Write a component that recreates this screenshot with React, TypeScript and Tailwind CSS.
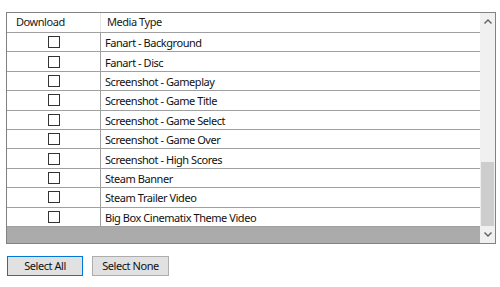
import React from "react";

const items = [
  "Fanart - Background",
  "Fanart - Disc",
  "Screenshot - Gameplay",
  "Screenshot - Game Title",
  "Screenshot - Game Select",
  "Screenshot - Game Over",
  "Screenshot - High Scores",
  "Steam Banner",
  "Steam Trailer Video",
  "Big Box Cinematix Theme Video",
];

export default function App() {
  return (
    <div
      className="w-[500px] h-[287px] bg-white text-[11px] tracking-[-0.45px] text-[#111]"
      style={{ fontFamily: '"Noto Sans", "Open Sans", sans-serif' }}
    >
      <div className="pt-[12px] pl-[6px]">
        <div className="w-[490px] h-[232px] border border-[#828282] flex">
          <div className="flex-1 flex flex-col">
            <div className="h-[20px] flex border-b border-[#a0a0a0] shrink-0">
              <div className="w-[94px] pl-[9px] flex items-center border-r border-[#e5e5e5] text-[#1a1a1a]">
                Download
              </div>
              <div className="flex-1 pl-[6px] flex items-center text-[#1a1a1a]">Media Type</div>
            </div>
            {items.map((t) => (
              <div key={t} className="h-[19.4px] flex border-b border-[#a0a0a0] shrink-0">
                <div className="w-[94px] flex items-center justify-center border-r border-[#a0a0a0]">
                  <div className="w-[12px] h-[12px] border border-[#333333] bg-white" />
                </div>
                <div className="flex-1 pl-[4px] pt-[1px] flex items-center leading-none">{t}</div>
              </div>
            ))}
            <div className="flex-1 bg-[#ababab]" />
          </div>
          <div className="w-[15px] bg-[#f0f0f0] flex flex-col">
            <div className="h-[17px] flex items-center justify-center">
              <svg width="8" height="5" viewBox="0 0 8 5">
                <path d="M0.5 4.5 L4 1 L7.5 4.5" fill="none" stroke="#606060" strokeWidth="1.4" />
              </svg>
            </div>
            <div className="flex-1 flex flex-col">
              <div className="h-[132px]" />
              <div className="flex-1 bg-[#cdcdcd] mx-[1px]" />
            </div>
            <div className="h-[17px] flex items-center justify-center">
              <svg width="8" height="5" viewBox="0 0 8 5">
                <path d="M0.5 0.5 L4 4 L7.5 0.5" fill="none" stroke="#606060" strokeWidth="1.4" />
              </svg>
            </div>
          </div>
        </div>
      </div>
      <div className="flex gap-[9px] pl-[7px] pt-[12px]">
        <button className="w-[76px] h-[20px] bg-[#e1e1e1] border border-[#0078d7] flex items-center justify-center">
          Select All
        </button>
        <button className="w-[77px] h-[20px] bg-[#e1e1e1] border border-[#adadad] flex items-center justify-center">
          Select None
        </button>
      </div>
    </div>
  );
}
